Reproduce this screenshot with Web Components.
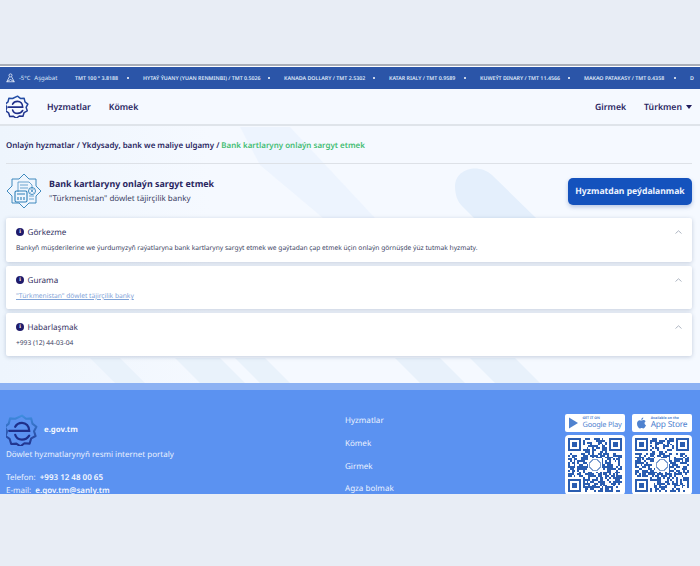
<!DOCTYPE html>
<html lang="tk">
<head>
<meta charset="utf-8">
<title>Bank kartlaryny onlaýn sargyt etmek</title>
<style>
    html, body { margin: 0; padding: 0; }
    body { background: #e8edf5; font-family: "Noto Sans", "Open Sans", sans-serif; color: #1f1b5c; text-rendering: geometricPrecision; }
</style>
</head>
<body>
<egov-page>
    <egov-ticker slot="ticker"></egov-ticker>
    <egov-nav slot="nav"></egov-nav>
    <egov-service slot="main"></egov-service>
    <egov-footer slot="footer"></egov-footer>
</egov-page>

<script>
    (function () {
        'use strict';

        const LOGO = `
            <defs><linearGradient id="lg" x1="0" y1="0" x2="0" y2="1"><stop offset="0" stop-color="var(--logo-top, #2450a8)"/><stop offset="1" stop-color="#1f2f8a"/></linearGradient></defs>
            <path d="M20 2l5 4 6.500-.500 1.500 6.500 5 4-3 5.500 2 6-5.500 3-2 6.500-6.500-.500-5 4-5-3.500-6.500.500-2-6.500-5-3.500 2-6-3-5.500 5-4 1.500-6.500 6.500.500z" fill="none" stroke="url(#lg)" stroke-width="2.600" stroke-linejoin="round"/>
            <path d="M4 21h25c0-6-4-10-9-10-4 0-7 2-8.500 5M29 27c-2 3-5 5-9 5-4 0-7.500-2.500-8.500-6" fill="none" stroke="#1f2f8a" stroke-width="2.800" stroke-linecap="round"/>`;

        customElements.define('egov-page', class extends HTMLElement {
            constructor() {
                super();
                this.attachShadow({mode: 'open'}).innerHTML = `
                    <style>
                        :host { display: block; width: 700px; height: 566px; overflow: hidden; padding-top: 64px; box-sizing: border-box; }
                        .line { height: 3px; background: #fff; border-top: 2px solid #a9aeb8; box-sizing: border-box; }
                    </style>
                    <div class="line"></div>
                    <slot name="ticker"></slot>
                    <slot name="nav"></slot>
                    <slot name="main"></slot>
                    <slot name="footer"></slot>
                `;
            }
        });

        customElements.define('egov-ticker', class extends HTMLElement {
            constructor() {
                super();
                const rates = [
                    ['TMT 100 ° 3.8188', 43],
                    ['HYTAÝ ÝUANY (YUAN RENMINBI) / TMT 0.5026', 116],
                    ['KANADA DOLLARY / TMT 2.5302', 80],
                    ['KATAR RIALY / TMT 0.9589', 66],
                    ['KUWEÝT DINARY / TMT 11.4566', 79],
                    ['MAKAO PATAKASY / TMT 0.4358', 81]
                ];
                const items = rates.map(r => `<span class="rate" style="width:${r[1]}px">${r[0]}</span><i></i>`).join('');
                this.attachShadow({mode: 'open'}).innerHTML = `
                    <style>
                        :host { display: flex; align-items: center; height: 22px; background: #2b55a8; color: #dfe8f8; overflow: hidden; white-space: nowrap; padding-left: 6px; box-sizing: border-box; }
                        svg { width: 9px; height: 10px; flex: none; }
                        .weather { font-size: 5.800px; margin-left: 4px; width: 56px; flex: none; }
                        .weather b { font-weight: 400; margin-left: 4px; font-size: 6px; }
                        .rate { font-size: 5.300px; font-weight: 600; flex: none; }
                        i { width: 2px; height: 2px; border-radius: 50%; background: #fff; margin: 0 14px 0 9px; flex: none; }
                    </style>
                    <svg viewBox="0 0 12 13" fill="none" stroke="#e6edfa" stroke-width="1.100"><circle cx="6" cy="3" r="2"/><path d="M4.500 5L1 11.500h10L7.500 5M1 11.500l5-3 5 3"/></svg>
                    <span class="weather">-5°C<b>Aşgabat</b></span>
                    ${items}
                    <span class="rate">D</span>
                `;
            }
        });

        customElements.define('egov-nav', class extends HTMLElement {
            constructor() {
                super();
                this.attachShadow({mode: 'open'}).innerHTML = `
                    <style>
                        :host { display: flex; align-items: center; height: 37px; padding: 0 8px 0 6px; background: #f5f9ff; border-bottom: 2px solid #dfe4ea; box-sizing: border-box; font-size: 8.700px; font-weight: 600; color: #29265f; }
                        svg { width: 23px; height: 23px; margin-right: 18px; flex: none; }
                        a { margin-right: 18px; }
                        .right { margin-left: auto; display: flex; align-items: center; }
                        .right a:last-child { margin-right: 0; }
                        .caret { display: inline-block; border: 3.500px solid transparent; border-top: 4px solid #1f1b5c; border-bottom: 0; margin-left: 4px; vertical-align: 1px; }
                    </style>
                    <svg viewBox="0 0 40 40">${LOGO}</svg>
                    <a>Hyzmatlar</a>
                    <a>Kömek</a>
                    <div class="right">
                        <a>Girmek</a>
                        <a>Türkmen<span class="caret"></span></a>
                    </div>
                `;
            }
        });

        customElements.define('egov-card', class extends HTMLElement {
            constructor() {
                super();
                this.attachShadow({mode: 'open'}).innerHTML = `
                    <style>
                        :host { display: block; background: #fff; border-radius: 2px; box-shadow: 0 1px 4px rgba(70, 90, 130, .28); padding: 6px 10px 0; box-sizing: border-box; height: var(--h, 43px); }
                        .head { display: flex; align-items: center; height: 16px; font-size: 8.100px; color: #33325f; }
                        .dot { width: 8px; height: 8px; border-radius: 50%; background: #1f1b6b; color: #fff; font: 700 6px/8px "Liberation Serif", serif; text-align: center; margin-right: 3.500px; flex: none; }
                        svg { margin-left: auto; margin-right: 0; width: 7px; height: 4px; }
                        .body { font-size: 6.670px; line-height: 9px; margin-top: 3px; color: #3c3f63; white-space: nowrap; }
                    </style>
                    <div class="head"><span class="dot">i</span><slot name="title"></slot>
                        <svg viewBox="0 0 7 4" fill="none" stroke="#9aa3b2" stroke-width=".8"><path d="M.5 3.500L3.500.8l3 2.700"/></svg>
                    </div>
                    <div class="body"><slot></slot></div>
                `;
            }
        });

        customElements.define('egov-service', class extends HTMLElement {
            constructor() {
                super();
                this.attachShadow({mode: 'open'}).innerHTML = `
                    <style>
                        :host { display: block; position: relative; height: 257px; padding: 0 8px 0 6px; background: linear-gradient(90deg, #eef5fd, #f5f9ff 30%); box-sizing: border-box; overflow: hidden; }
                        .bg { position: absolute; inset: 0; width: 100%; height: 100%; }
                        .wrap { position: relative; }
                        .crumbs { font-size: 7.950px; font-weight: 600; color: #29265f; height: 37px; line-height: 40px; border-bottom: 1px solid #dde1e7; box-sizing: content-box; white-space: nowrap; }
                        .crumbs b { font-weight: 600; color: #43bd73; }
                        .top { display: flex; align-items: center; height: 54px; }
                        .top svg { width: 36px; height: 36px; margin-right: 7px; flex: none; }
                        h1 { margin: 0; font-size: 8.900px; line-height: 14px; font-weight: 700; color: #29265f; }
                        p { margin: 1px 0 0; font-size: 8px; line-height: 14px; color: #3c3f63; }
                        .btn { margin-left: auto; width: 124px; height: 27px; line-height: 26px; background: #1452bd; color: #eef4ff; border-radius: 5px; font-size: 8.600px; font-weight: 700; text-align: center; box-shadow: 0 2px 4px rgba(40, 80, 160, .3); white-space: nowrap; }
                        .cards { display: flex; flex-direction: column; gap: 4px; }
                        a { color: #7fa3d8; text-decoration: underline; }
                    </style>
                    <svg class="bg" viewBox="0 0 700 257" preserveAspectRatio="none">
                        <path d="M240 1h50l85 91h-52l-63-53z" fill="#e9f2fd" opacity=".7"/>
                        <path d="M455 60c0-16 22-24 37-11l44 43h-62l-12-12c-5-5-7-12-7-20z" fill="#e4effc"/>
                        <path d="M90 232h30l25 25h-30zM175 232h45l25 25h-45zM235 232h30l25 25h-30z" fill="#e9f2fb"/>
                        <path d="M395 232h45l25 25h-45zM470 232h45l25 25h-45z" fill="#e8f1fb"/>
                    </svg>
                    <div class="wrap">
                        <div class="crumbs">Onlaýn hyzmatlar / Ykdysady, bank we maliye ulgamy / <b>Bank kartlaryny onlaýn sargyt etmek</b></div>
                        <div class="top">
                            <svg viewBox="0 0 36 36" fill="none" stroke="#2c7fb8" stroke-width=".9" stroke-linejoin="round">
                                <path d="M18 1l5 5h7v7l5 5-5 5v7h-7l-5 5-5-5H6v-7l-5-5 5-5V6h7z"/>
                                <path d="M12 19V9h11l3 3v6M14 12h8M14 15h8" stroke="#5b9bc9"/>
                                <rect x="9" y="18" width="12" height="11" rx="1.500" stroke-width="1.100"/>
                                <path d="M11 21h8M12 24v3M15 24v3M18 24v3" stroke-width="1.100"/>
                                <circle cx="26" cy="18" r="3.500"/><path d="M24.500 16.500l3 3M27.500 16.500l-3 3M23 23h5M23 26h5" stroke="#5b9bc9"/>
                            </svg>
                            <div>
                                <h1>Bank kartlaryny onlaýn sargyt etmek</h1>
                                <p>"Türkmenistan" döwlet täjirçilik banky</p>
                            </div>
                            <div class="btn">Hyzmatdan peýdalanmak</div>
                        </div>
                        <div class="cards">
                            <egov-card style="--h:44px"><span slot="title">Görkezme</span>Bankyň müşderilerine we ýurdumyzyň raýatlaryna bank kartlaryny sargyt etmek we gaýtadan çap etmek üçin onlaýn görnüşde ýüz tutmak hyzmaty.</egov-card>
                            <egov-card><span slot="title">Gurama</span><a>"Türkmenistan" döwlet täjirçilik banky</a></egov-card>
                            <egov-card><span slot="title">Habarlaşmak</span>+993 (12) 44-03-04</egov-card>
                        </div>
                    </div>
                `;
            }
        });

        // the codes are only a picture: same seed gives the same modules every run
        customElements.define('egov-qr', class extends HTMLElement {
            constructor() {
                super();
                this.attachShadow({mode: 'open'});
            }

            connectedCallback() {
                const n = 29;
                let seed = Number(this.getAttribute('seed')) || 7;
                let cells = '';
                for (let y = 0; y < n; y++) {
                    for (let x = 0; x < n; x++) {
                        seed = (seed * 16807) % 2147483647;
                        const hub = Math.abs(x - 14) < 4 && Math.abs(y - 14) < 4;
                        const eyeZone = (x < 8 && y < 8) || (x > n - 9 && y < 8) || (x < 8 && y > n - 9);
                        if (!eyeZone && !hub && seed % 100 < 52) {
                            cells += `M${x} ${y}h1v1h-1z`;
                        }
                    }
                }
                const eye = (x, y) => `<path d="M${x} ${y}h7v7h-7zM${x + 1} ${y + 1}v5h5v-5z" fill-rule="evenodd"/><rect x="${x + 2}" y="${y + 2}" width="3" height="3"/>`;
                this.shadowRoot.innerHTML = `
                    <style>
                        :host { display: block; width: 60px; height: 60px; background: #fff; border-radius: 4px; padding: 3px; box-sizing: border-box; }
                        svg { display: block; width: 100%; height: 100%; fill: #2a5db0; }
                    </style>
                    <svg viewBox="0 0 29 29" shape-rendering="crispEdges">
                        <path d="${cells}"/>${eye(0, 0)}${eye(22, 0)}${eye(0, 22)}
                        <circle cx="14.500" cy="14.500" r="3" fill="none" stroke="#7f9fcf" stroke-width=".8"/>
                    </svg>
                `;
            }
        });

        customElements.define('egov-footer', class extends HTMLElement {
            constructor() {
                super();
                this.attachShadow({mode: 'open'}).innerHTML = `
                    <style>
                        :host { --logo-top: #3f8de0; display: grid; grid-template-columns: 339px 1fr 127px; height: 111px; overflow: hidden; background: #5b92f1; border-top: 7px solid #8db2f3; padding: 0 8px 0 6px; box-sizing: border-box; color: #eaf1fe; font-size: 8px; }
                        .brand { display: flex; align-items: center; height: 34px; margin-top: 23px; font-weight: 700; font-size: 7.800px; color: #f4f8ff; }
                        .brand svg { width: 32px; height: 32px; margin-right: 6px; }
                        .about { margin-top: 1px; line-height: 14px; }
                        .contact { margin-top: 10px; line-height: 12.500px; white-space: nowrap; }
                        .contact b { font-weight: 600; color: #f6f9ff; margin-left: 2px; }
                        .links { display: flex; flex-direction: column; gap: 9.500px; padding-top: 24px; font-size: 8.050px; line-height: 13.300px; }
                        .apps { display: grid; grid-template-columns: 60px 60px; gap: 3px 7px; padding-top: 24px; align-content: start; }
                        .badge { height: 18px; background: #fff; border-radius: 2px; display: flex; align-items: center; justify-content: center; color: #4f82cf; overflow: hidden; }
                        .badge svg { width: 9px; height: 12px; margin-right: 5px; flex: none; }
                        .badge div { line-height: 1; font-size: 7.400px; white-space: nowrap; letter-spacing: -.2px; }
                        .badge.apple div { font-size: 8.400px; }
                        .badge small { display: block; font-size: 3.500px; font-weight: 700; margin-bottom: 1px; letter-spacing: 0; }
                    </style>
                    <div>
                        <div class="brand"><svg viewBox="0 0 40 40">${LOGO}</svg>e.gov.tm</div>
                        <div class="about">Döwlet hyzmatlarynyň resmi internet portaly</div>
                        <div class="contact">Telefon: <b>+993 12 48 00 65</b><br>E-mail: <b>e.gov.tm@sanly.tm</b></div>
                    </div>
                    <div class="links"><span>Hyzmatlar</span><span>Kömek</span><span>Girmek</span><span>Agza bolmak</span></div>
                    <div class="apps">
                        <div class="badge"><svg viewBox="0 0 10 12"><path d="M0 0l10 6-10 6z" fill="#4f82cf"/></svg><div><small>GET IT ON</small>Google Play</div></div>
                        <div class="badge apple"><svg viewBox="0 0 10 12"><path d="M7 0c0 1.500-1 2.500-2.200 2.600C4.700 1.300 5.700.2 7 0zM5 3.300c.8 0 1.400-.5 2.300-.5 1 0 1.800.5 2.300 1.200-1.900 1.100-1.500 3.800.4 4.500C9.400 10 8.400 12 7.300 12c-.8 0-1.200-.5-2.100-.5-1 0-1.300.5-2.100.5C1.700 12 0 9.300 0 6.900 0 4.400 1.500 2.900 3 2.900c.8 0 1.400.4 2 .4z" fill="#4f82cf"/></svg><div><small>Available on the</small>App Store</div></div>
                        <egov-qr seed="1234"></egov-qr>
                        <egov-qr seed="98765"></egov-qr>
                    </div>
                `;
            }
        });
    })();
</script>
</body>
</html>
